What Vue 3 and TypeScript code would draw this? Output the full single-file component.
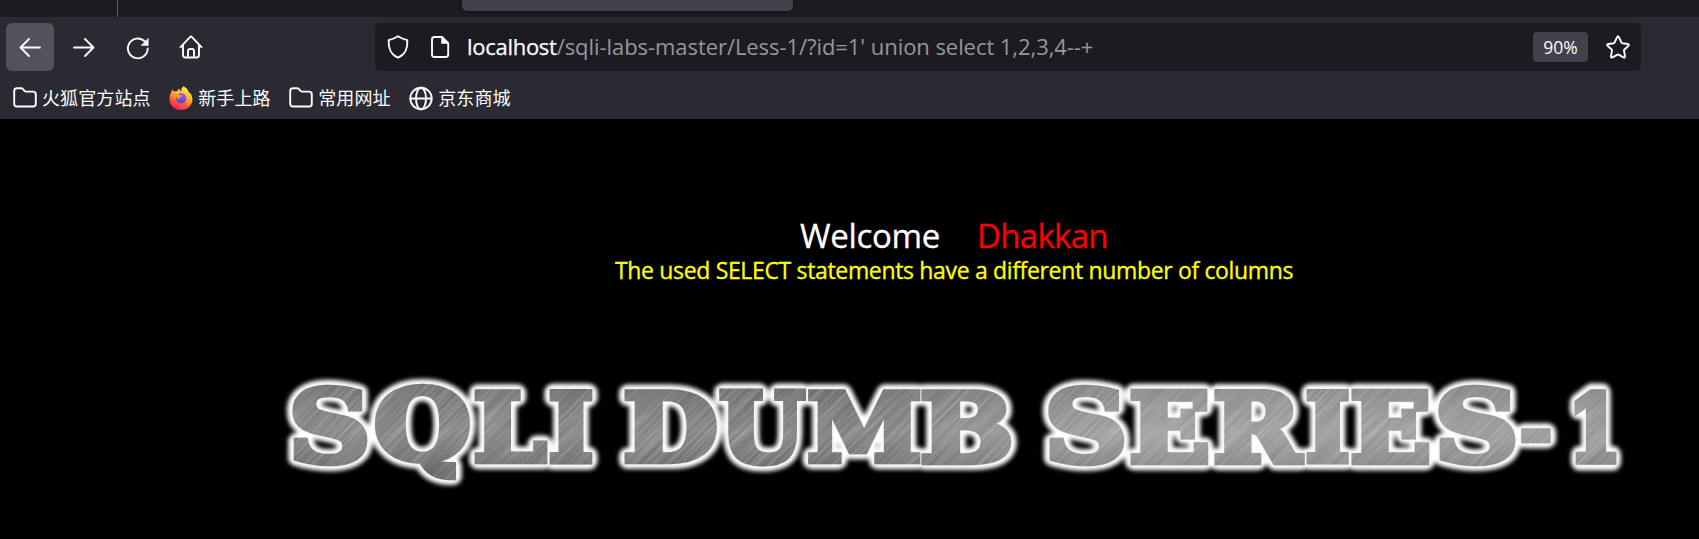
<script setup lang="ts">
interface Bookmark {
  label: string
  icon: 'folder' | 'firefox' | 'globe'
}

interface LetterBox {
  char: string
  left: number
  right: number
  top: number
  bottom: number
}

const bookmarks: Bookmark[] = [
  { label: '火狐官方站点', icon: 'folder' },
  { label: '新手上路', icon: 'firefox' },
  { label: '常用网址', icon: 'folder' },
  { label: '京东商城', icon: 'globe' },
]

const WEIGHT = 7
const FONT = 'bold 100px "DejaVu Serif", serif'

// Ink box of every banner letter, in banner coordinates.
const boxes: LetterBox[] = [
  { char: 'S', left: 22, right: 98, top: 26, bottom: 107 },
  { char: 'Q', left: 105, right: 200, top: 25, bottom: 121 },
  { char: 'L', left: 204, right: 278, top: 30, bottom: 105 },
  { char: 'I', left: 279, right: 323, top: 30, bottom: 105 },
  { char: 'D', left: 354, right: 447, top: 30, bottom: 105 },
  { char: 'U', left: 449, right: 537, top: 30, bottom: 107 },
  { char: 'M', left: 538, right: 650, top: 30, bottom: 105 },
  { char: 'B', left: 651, right: 741, top: 30, bottom: 106 },
  { char: 'S', left: 778, right: 855, top: 26, bottom: 107 },
  { char: 'E', left: 860, right: 939, top: 30, bottom: 106 },
  { char: 'R', left: 944, right: 1035, top: 30, bottom: 106 },
  { char: 'I', left: 1036, right: 1079.5, top: 30, bottom: 105 },
  { char: 'E', left: 1081, right: 1160, top: 30, bottom: 106 },
  { char: 'S', left: 1168, right: 1246, top: 26, bottom: 107 },
  { char: '-', left: 1251, right: 1281, top: 69, bottom: 85 },
  { char: '1', left: 1304, right: 1347, top: 30, bottom: 105 },
]

const ctx = document.createElement('canvas').getContext('2d')!
ctx.font = FONT

const letters = boxes.map((b) => {
  const m = ctx.measureText(b.char)
  const inset = WEIGHT / 2
  const sx = (b.right - b.left - WEIGHT) / (m.actualBoundingBoxRight + m.actualBoundingBoxLeft)
  const sy = (b.bottom - b.top - WEIGHT) / (m.actualBoundingBoxAscent + m.actualBoundingBoxDescent)
  const tx = b.left + inset + m.actualBoundingBoxLeft * sx
  const ty = b.top + inset + m.actualBoundingBoxAscent * sy
  return { char: b.char, transform: `translate(${tx} ${ty}) scale(${sx} ${sy})` }
})
</script>

<template>
  <div class="window">
    <div class="tabs">
      <span class="tab-divider"></span>
      <span class="active-tab"></span>
    </div>

    <div class="toolbar">
      <button class="nav active" aria-label="Back">
        <svg viewBox="0 0 24 24"><path d="M22 12.500H2.500M11 4L2.500 12.500l8.500 8.500" /></svg>
      </button>
      <button class="nav" aria-label="Forward">
        <svg viewBox="0 0 24 24"><path d="M2 12.500h19.500M13 4L21.500 12.500 13 21" /></svg>
      </button>
      <button class="nav" aria-label="Reload">
        <svg viewBox="0 0 24 24">
          <path d="M21.700 13.500A9.900 9.900 0 1 1 18.700 6.300" />
          <path class="solid" d="M22.300 3.500v7h-7z" />
        </svg>
      </button>
      <button class="nav home" aria-label="Home">
        <svg viewBox="0 0 24 24">
          <path d="M1.500 12.200L11 2.100q1-1 2 0l9.500 10.100M4 10v10q0 2.500 2.500 2.500h11Q20 22.500 20 20V10M9 22v-6q0-2 2-2h2q2 0 2 2v6" />
        </svg>
      </button>
      <div class="address">
        <svg class="shield" viewBox="0 0 24 24">
          <path d="M12 1.300c3 2 6 3.100 9.300 3.800.5 6.400-1.500 14.400-9.300 17.600C4.200 19.500 2.200 11.500 2.700 5.100 6 4.400 9 3.300 12 1.300z" />
        </svg>
        <svg class="page-icon" viewBox="0 0 20 24">
          <path d="M4.500 2H12l6.200 6.200v11.300q0 2.500-2.500 2.500H4.500Q2 22 2 19.500v-15Q2 2 4.500 2z" />
          <path class="solid" d="M11.500 2v6.500H18z" />
        </svg>
        <div class="url"><span class="host">localhost</span><span class="path">/sqli-labs-master/Less-1/?id=1' union select 1,2,3,4--+</span></div>
        <span class="zoom">90%</span>
        <svg class="star" viewBox="0 0 24 24">
          <path d="M11 2.300q1-2 2 0l2.500 5.400q.2.500.8.600l5.500.7q1.800.3.600 1.700l-4.100 4q-.4.400-.3 1l1 5.500q.2 2-1.500 1.100l-5-2.700q-.5-.3-1 0l-5 2.700q-1.700.9-1.500-1.100l1-5.500q.1-.6-.3-1l-4.100-4Q.4 9.300 2.200 9l5.500-.7q.6-.1.800-.6z" />
        </svg>
      </div>
    </div>

    <div class="bookmarks">
      <div v-for="b in bookmarks" :key="b.label" class="bookmark">
        <svg v-if="b.icon === 'folder'" viewBox="0 0 24 24">
          <path d="M1.200 5Q1.200 2.300 4 2.300h4q1.200 0 2 .9l1.500 1.700q.7.700 1.700.7H20q2.800 0 2.800 2.800v9.300q0 2.800-2.800 2.800H4q-2.800 0-2.800-2.800z" />
        </svg>
        <svg v-else-if="b.icon === 'globe'" viewBox="0 0 24 24">
          <circle cx="12" cy="12.500" r="10.700" />
          <ellipse cx="12" cy="12.500" rx="5" ry="10.700" />
          <path d="M1.500 12.500h21" />
        </svg>
        <svg v-else class="fox" viewBox="0 0 24 24">
          <defs>
            <linearGradient id="flame" x1=".75" y1="0" x2=".3" y2="1">
              <stop offset="0" stop-color="#fff14a" />
              <stop offset=".4" stop-color="#ffb52b" />
              <stop offset=".7" stop-color="#ff5a36" />
              <stop offset="1" stop-color="#f5156c" />
            </linearGradient>
            <linearGradient id="core" x1=".7" y1="0" x2=".3" y2="1">
              <stop offset="0" stop-color="#a650ff" />
              <stop offset="1" stop-color="#4b46c8" />
            </linearGradient>
          </defs>
          <path class="flame" d="M14.500.300c3 1.500 4.600 3.600 5 5.400 2.600 1.700 4.300 5 3.900 8.800C22.700 20 18 24 12.200 24 5.500 24 .6 19.200.500 12.900c0-3.300 1-6.300 3.300-9.700.2 1.200.5 1.800 1 2.400 1-.3 2-.3 3-.100C8.500 4 9.500 3 10.500 2.500c0 1.700.7 2.600 1.800 3.100C11.700 3.600 12.700 1.700 14.500.300z" />
          <circle class="core" cx="12.300" cy="12.300" r="5.100" />
          <path class="snout" d="M3.500 7.500c3-.8 5 .3 6 1.500 1.500-.3 3.400.1 4 .8-.6 1.200-1.900 1.500-3 1.900-.5.600-.4 1.400.1 1.900-1.700-.5-3.300-2-3.100-3.700z" />
        </svg>
        <span>{{ b.label }}</span>
      </div>
    </div>

    <main class="content">
      <div class="welcome"><span>Welcome</span><span class="name">Dhakkan</span></div>
      <p class="error">The used SELECT statements have a different number of columns</p>

      <svg class="banner" width="1370" height="145" viewBox="0 0 1370 145" role="img" aria-label="SQLI DUMB SERIES-1">
        <defs>
          <filter id="glow" x="-2%" y="-20%" width="104%" height="140%">
            <feGaussianBlur stdDeviation="2.200" />
          </filter>
          <filter id="brushed" x="0" y="0" width="100%" height="100%" color-interpolation-filters="sRGB">
            <feTurbulence type="fractalNoise" baseFrequency="0.012 0.35" numOctaves="3" seed="4" />
            <feColorMatrix type="matrix" values="0 0 0 0 1  0 0 0 0 1  0 0 0 0 1  .5 0 0 0 -.17" />
          </filter>
          <linearGradient id="steel" x1="0" x2="1" y1="0" y2="0">
            <stop offset="0" stop-color="#7c7c7c" />
            <stop offset=".42" stop-color="#757575" />
            <stop offset=".54" stop-color="#8a8a8a" />
            <stop offset=".65" stop-color="#979797" />
            <stop offset="1" stop-color="#8f8f8f" />
          </linearGradient>
          <linearGradient id="sheen" x1="0" x2="0" y1="0" y2="1">
            <stop offset=".15" stop-color="#000" stop-opacity=".1" />
            <stop offset=".5" stop-color="#fff" stop-opacity=".08" />
            <stop offset=".78" stop-color="#000" stop-opacity=".12" />
          </linearGradient>
          <mask id="lettering" maskUnits="userSpaceOnUse" x="0" y="0" width="1370" height="145">
            <g class="glyphs face">
              <text v-for="(l, i) in letters" :key="i" :transform="l.transform">{{ l.char }}</text>
            </g>
          </mask>
        </defs>
        <g class="glyphs halo" filter="url(#glow)" aria-hidden="true">
          <text v-for="(l, i) in letters" :key="i" :transform="l.transform">{{ l.char }}</text>
        </g>
        <g class="glyphs rim" aria-hidden="true">
          <text v-for="(l, i) in letters" :key="i" :transform="l.transform">{{ l.char }}</text>
        </g>
        <g mask="url(#lettering)">
          <rect width="1370" height="145" fill="url(#steel)" />
          <g transform="rotate(-45 685 72)">
            <rect x="0" y="-650" width="1370" height="1440" filter="url(#brushed)" />
          </g>
          <rect width="1370" height="145" fill="url(#sheen)" />
        </g>
      </svg>
    </main>
  </div>
</template>

<style>
html,
body {
  margin: 0;
  background: #000;
  overflow: hidden;
}
</style>

<style scoped>
.window {
  width: 1699px;
  height: 539px;
  background: #000;
  color: #fbfbfe;
  font-family: "Open Sans", "Noto Sans", "Noto Sans CJK SC", sans-serif;
  overflow: hidden;
}

.tabs {
  height: 17px;
  display: flex;
  background: #1c1b22;
}

.tab-divider {
  width: 1px;
  margin-left: 117px;
  background: #5b5b64;
}

.active-tab {
  width: 331px;
  height: 11px;
  margin-left: 344px;
  border-radius: 0 0 5px 5px;
  background: #42414d;
  box-shadow: 0 0 4px rgba(0, 0, 0, 0.5);
}

.toolbar {
  height: 60px;
  box-sizing: border-box;
  padding: 6px 0 6px 6px;
  display: flex;
  gap: 6px;
  background: #2b2a33;
}

svg {
  display: block;
  flex: none;
  overflow: visible;
}

.toolbar path,
.bookmark path,
.bookmark circle,
.bookmark ellipse {
  fill: none;
  stroke: #fbfbfe;
  stroke-width: 1.9;
  stroke-linecap: round;
  stroke-linejoin: round;
}

.toolbar path.solid {
  fill: #fbfbfe;
  stroke-width: 0.5;
}

.nav {
  width: 48px;
  height: 48px;
  padding: 0;
  border: 0;
  border-radius: 6px;
  background: none;
  display: grid;
  place-items: center;
}

.nav svg {
  width: 24px;
  height: 24px;
}

.nav.home {
  margin: 0 1px 0 -1px;
}

.nav.active {
  background: #52525e;
}

.address {
  width: 1266px;
  height: 48px;
  box-sizing: border-box;
  margin-left: 153px;
  padding: 0 11px;
  display: flex;
  align-items: center;
  border-radius: 6px;
  background: #1c1b22;
}

.shield {
  width: 24px;
  height: 24px;
}

.page-icon {
  width: 20px;
  height: 24px;
  margin-left: 20px;
}

.url {
  flex: 1;
  margin-left: 17px;
  font-size: 22px;
  line-height: 46px;
  height: 48px;
  letter-spacing: -0.06px;
  white-space: pre;
}

.host {
  letter-spacing: -0.28px;
  -webkit-text-stroke: 0.25px #fbfbfe;
}

.path {
  color: #96959b;
}

.zoom {
  width: 55px;
  height: 30px;
  border-radius: 4px;
  background: #42414d;
  font-size: 17.5px;
  line-height: 30px;
  text-align: center;
}

.star {
  width: 24px;
  height: 24px;
  margin-left: 18px;
}

.bookmarks {
  height: 42px;
  box-sizing: border-box;
  padding: 0 0 0 13px;
  display: flex;
  gap: 18.6px;
  background: #2b2a33;
}

.bookmark {
  height: 42px;
  display: flex;
  align-items: center;
  gap: 5px;
  font: 18px/40px "Noto Sans CJK SC", sans-serif;
  letter-spacing: 0.1px;
}

.bookmark span {
  height: 42px;
}

.bookmark svg {
  width: 24px;
  height: 24px;
}

.bookmark .fox path,
.bookmark .fox circle {
  stroke: none;
}

.bookmark .fox .flame {
  fill: url(#flame);
}

.bookmark .fox .core {
  fill: url(#core);
}

.bookmark .fox .snout {
  fill: #ff9828;
}

.content {
  height: 420px;
  display: flex;
  flex-direction: column;
}

.welcome {
  height: 36px;
  margin: 99px 0 0 800px;
  display: flex;
  gap: 37px;
  color: #fff;
  font-size: 33px;
  line-height: 36px;
  letter-spacing: -0.3px;
  -webkit-text-stroke: 0.3px currentColor;
}

.name {
  color: #f00;
  letter-spacing: -0.7px;
}

.error {
  height: 30px;
  margin: 1px 0 0 615px;
  color: #ff0;
  font-size: 23px;
  line-height: 30px;
  letter-spacing: -0.34px;
  white-space: nowrap;
  -webkit-text-stroke: 0.3px #ff0;
}

.banner {
  margin: 74px 0 0 270px;
}

.glyphs {
  font: bold 100px "DejaVu Serif", serif;
  stroke-linejoin: round;
}

.glyphs text {
  vector-effect: non-scaling-stroke;
}

.halo {
  fill: #fff;
  stroke: #fff;
  stroke-width: 17.5px;
}

.rim {
  fill: #f4f4f4;
  stroke: #f4f4f4;
  stroke-width: 9.5px;
}

.face {
  fill: #fff;
  stroke: #fff;
  stroke-width: 7px;
  stroke-linejoin: miter;
}
</style>
